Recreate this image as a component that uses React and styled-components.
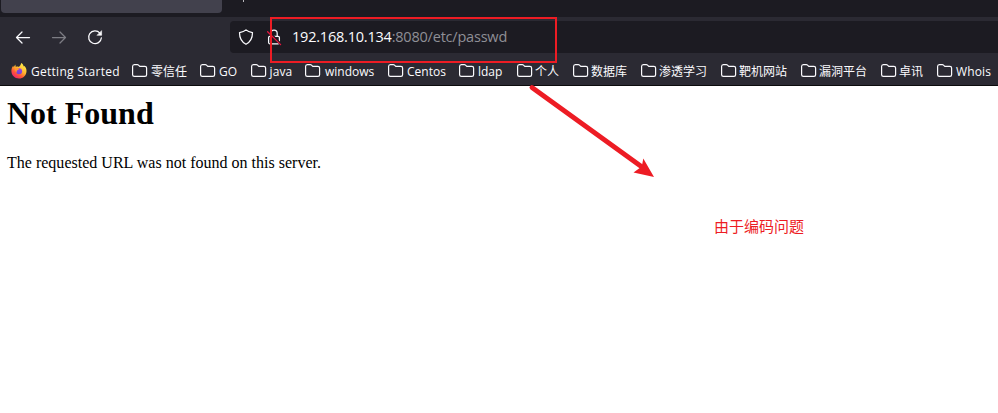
import React from "react";
import styled, { createGlobalStyle } from "styled-components";

const GlobalStyle = createGlobalStyle`
  * { box-sizing: border-box; }
  html, body { margin: 0; background: #fff; }
  body { overflow: hidden; }
`;

const Window = styled.div`
  position: relative;
  width: 998px;
  height: 413px;
  overflow: hidden;
  background: #fff;
  font-family: "Open Sans", "Noto Sans CJK SC", sans-serif;
`;
const TabStrip = styled.div`
  display: flex;
  align-items: flex-start;
  height: 17px;
  padding-left: 1px;
  background: #1c1b22;
`;
const ActiveTab = styled.div`
  width: 221px;
  height: 13px;
  border-radius: 0 0 4px 4px;
  background: #42414d;
`;
const TabTitleTail = styled.div`
  width: 1px;
  height: 2px;
  margin-left: 21px;
  background: #b9b9bd;
`;
const NavBar = styled.div`
  display: flex;
  align-items: center;
  height: 40px;
  padding-left: 15px;
  background: #2b2a33;
`;
const NavButtons = styled.div`
  display: flex;
  gap: 20px;
  width: 215px;
  color: #fbfbfe;
`;
const NavIcon = styled.svg`
  width: 16px;
  height: 16px;
  flex: none;
  overflow: visible;
  fill: none;
  stroke: currentColor;
  stroke-width: 1.25;
  stroke-linecap: round;
  stroke-linejoin: round;
  opacity: ${(p) => (p.$dim ? 0.4 : 1)};
`;
const UrlBar = styled.div`
  display: flex;
  align-items: center;
  flex: 1;
  height: 32px;
  padding-left: 8px;
  gap: 12px;
  border-radius: 4px 0 0 4px;
  background: #1c1b22;
  color: #fbfbfe;
`;
const Address = styled.div`
  margin-left: -2px;
  font-size: 14.5px;
  line-height: 20px;
  letter-spacing: -0.21px;
  white-space: nowrap;
  color: #8f8f96;
`;
const Host = styled.span`
  color: #fbfbfe;
`;
const BookmarkBar = styled.div`
  display: flex;
  align-items: center;
  height: 29px;
  padding-left: 11px;
  border-bottom: 1px solid #0c0c0d;
  background: #2b2a33;
  color: #fbfbfe;
`;
const Bookmark = styled.div`
  display: flex;
  align-items: center;
  flex: none;
  width: ${(p) => p.$width}px;
  gap: ${(p) => p.$gap}px;
`;
const BookmarkIcon = styled.svg`
  width: 16px;
  height: 16px;
  flex: none;
  overflow: visible;
`;
const BookmarkLabel = styled.span`
  padding-top: 2px;
  font-size: 12px;
  line-height: 16px;
  letter-spacing: ${(p) => p.$tracking}px;
  white-space: nowrap;
`;
const Page = styled.main`
  padding: 9px 7px;
  color: #000;
  font-family: "Liberation Serif", serif;
`;
const Title = styled.h1`
  margin: 0;
  font-size: 32px;
  line-height: 37px;
  font-weight: 700;
`;
const Message = styled.p`
  margin: 22px 0 0;
  font-size: 16px;
  line-height: 18px;
  letter-spacing: 0.01px;
`;
const HighlightBox = styled.div`
  position: absolute;
  left: 270px;
  top: 17px;
  width: 287px;
  height: 46px;
  border: 2px solid #ed1c24;
`;
const Arrow = styled.svg`
  position: absolute;
  left: 525px;
  top: 80px;
  width: 135px;
  height: 105px;
`;
const Note = styled.div`
  position: absolute;
  left: 714px;
  top: 215px;
  color: #ed1c24;
  font: 15px/22px "Noto Sans CJK SC", sans-serif;
  white-space: nowrap;
`;

const Folder = () => (
  <BookmarkIcon viewBox="0 0 16 16" fill="none" stroke="#fbfbfe" strokeWidth="1.2">
    <path d="M.6 3.5Q.6 1.6 2.4 1.6H5.3Q6 1.6 6.5 2.1L7.8 3.4H12.9Q14.6 3.4 14.6 5.1V11.7Q14.6 13.4 12.9 13.4H2.4Q.6 13.4 .6 11.7Z" />
  </BookmarkIcon>
);

const Firefox = () => (
  <BookmarkIcon viewBox="0 0 16 16">
    <defs>
      <linearGradient id="flame" x1="0.85" y1="0.05" x2="0.25" y2="0.95">
        <stop offset="0" stopColor="#fff44f" />
        <stop offset="0.45" stopColor="#ffb52e" />
        <stop offset="0.72" stopColor="#ff5a36" />
        <stop offset="1" stopColor="#f0246b" />
      </linearGradient>
      <linearGradient id="globe" x1="0.8" y1="0" x2="0.3" y2="1">
        <stop offset="0" stopColor="#a044e1" />
        <stop offset="1" stopColor="#6b42d6" />
      </linearGradient>
    </defs>
    <path
      fill="url(#flame)"
      d="M10.2 0C12 1.1 12.5 2.5 12.8 3.4L13.5 2.9C15 4.3 15.6 6.3 15.5 8.2C15.3 12.5 12 15.6 8 15.6C3.7 15.6.4 12.3.4 8.1C.4 6.3.9 4.4 2.2 2.8L2.7 4.3L4.3 1.6L4.8 4C6 3.4 7 3.5 7.8 4C8.8 3.2 9.8 1.9 10.2 0Z"
    />
    <circle cx="8.1" cy="8.2" r="3" fill="url(#globe)" />
    <path fill="#ff9a2c" d="M3.9 5C5.4 4.4 7 4.7 8.1 6.1C7.4 7.1 6.5 7 5.9 7.6C5.5 8.2 5.6 9 6.2 9.8C4.5 9 3.7 7 3.9 5Z" />
  </BookmarkIcon>
);

const bookmarks = [
  { label: "Getting Started", width: 121, gap: 4, tracking: 0.27, firefox: true },
  { label: "零信任", width: 68 },
  { label: "GO", width: 51, tracking: 0.1 },
  { label: "java", width: 54, gap: 2.5, tracking: 0.1 },
  { label: "windows", width: 83, gap: 4 },
  { label: "Centos", width: 71 },
  { label: "ldap", width: 58 },
  { label: "个人", width: 56, gap: 2 },
  { label: "数据库", width: 68, gap: 2 },
  { label: "渗透学习", width: 80, gap: 2 },
  { label: "靶机网站", width: 80, gap: 2 },
  { label: "漏洞平台", width: 80, gap: 2 },
  { label: "卓讯", width: 56, gap: 2 },
  { label: "Whois", width: 60, tracking: 0.15 },
];

export default function App() {
  return (
    <Window>
      <GlobalStyle />
      <TabStrip>
        <ActiveTab />
        <TabTitleTail />
      </TabStrip>
      <NavBar>
        <NavButtons>
          <NavIcon viewBox="0 0 16 16">
            <path d="M14.5 8.5H1.5M7 3L1.5 8.5L7 14" />
          </NavIcon>
          <NavIcon viewBox="0 0 16 16" $dim>
            <path d="M1.5 8.5H14.5M9 3L14.5 8.5L9 14" />
          </NavIcon>
          <NavIcon viewBox="0 0 16 16">
            <path d="M12.9 4.1A6.4 6.4 0 1 0 14.4 8.8" />
            <path d="M14.6 2V6.3H10.3Z" fill="currentColor" strokeWidth="0.6" />
          </NavIcon>
        </NavButtons>
        <UrlBar>
          <NavIcon viewBox="0 0 16 16">
            <path d="M8 .9C9.5 2.4 11.7 3.2 14.5 3.6C14.5 8.6 12.9 12.9 8 15.3C3.1 12.9 1.5 8.6 1.5 3.6C4.3 3.2 6.5 2.4 8 .9Z" />
          </NavIcon>
          <NavIcon viewBox="0 0 16 16">
            <path d="M4.8 7V4.4A3.2 3.2 0 0 1 11.2 4.4V7M3.8 7.4H12.2Q13.4 7.4 13.4 8.6V13.6Q13.4 14.8 12.2 14.8H3.8Q2.6 14.8 2.6 13.6V8.6Q2.6 7.4 3.8 7.4Z" />
            <path d="M2.2 2.4L15 15.4" stroke="#1c1b22" strokeWidth="2.6" />
            <path d="M1.6 2.8L14.6 15.6" stroke="#e5173f" strokeWidth="1.3" />
          </NavIcon>
          <Address>
            <Host>192.168.10.134</Host>:8080/etc/passwd
          </Address>
        </UrlBar>
      </NavBar>
      <BookmarkBar>
        {bookmarks.map((b) => (
          <Bookmark key={b.label} $width={b.width} $gap={b.gap ?? 3}>
            {b.firefox ? <Firefox /> : <Folder />}
            <BookmarkLabel $tracking={b.tracking ?? 0}>{b.label}</BookmarkLabel>
          </Bookmark>
        ))}
      </BookmarkBar>
      <Page>
        <Title>Not Found</Title>
        <Message>The requested URL was not found on this server.</Message>
      </Page>
      <HighlightBox />
      <Arrow viewBox="0 0 135 105">
        <path d="M7 7.5L117 87" stroke="#ed1c24" strokeWidth="4.9" strokeLinecap="round" />
        <path d="M129 97L118.3 78.5L116.8 86.5L108.5 92.5Z" fill="#ed1c24" />
      </Arrow>
      <Note>由于编码问题</Note>
    </Window>
  );
}
